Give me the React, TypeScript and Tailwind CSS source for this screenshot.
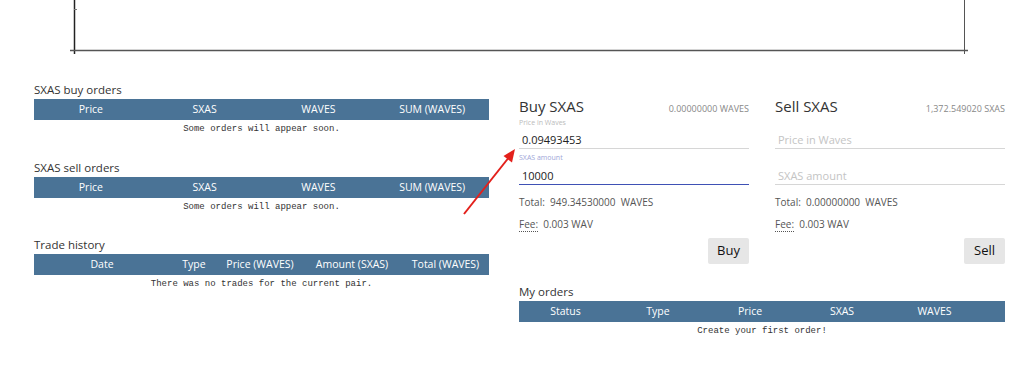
import React from "react";

const sans = "font-['Open_Sans','Noto_Sans',sans-serif]";
const mono = "font-['Liberation_Mono',monospace]";

function OrdersTable({ title, cols, widths, msg }: { title: string; cols: string[]; widths?: string[]; msg: string }) {
  return (
    <div>
      <div className="text-[11.5px] leading-[16px] text-[#333] mb-[1px] pt-[1px]">{title}</div>
      <div className="h-[21px] bg-[#4a7396] flex items-center text-white text-[10.5px]">
        {cols.map((c, i) => (
          <div key={c} className={`${widths ? widths[i] : "flex-1"} text-center whitespace-nowrap`}>{c}</div>
        ))}
      </div>
      <div className={`${mono} text-[9px] leading-[18px] text-center text-[#333]`}>{msg}</div>
    </div>
  );
}

function TradeForm({ kind, balance, filled }: { kind: string; balance: string; filled: boolean }) {
  return (
    <div className="w-[230px] flex flex-col">
      <div className="flex items-baseline justify-between h-[20px]">
        <span className="text-[15px] leading-[16px] text-[#333]">{kind} SXAS</span>
        <span className="text-[9px] leading-[12px] text-[#888]">{balance}</span>
      </div>
      <div className="h-[10px] mt-[0px] text-[7px] leading-[10px] text-[#bbb]">{filled ? "Price in Waves" : ""}</div>
      <div className="h-[21px] border-b border-[#d6d6d6] flex items-end pb-[1px] pl-[3px] text-[11px] leading-[14px]">
        {filled ? <span className="text-[#222]">0.09493453</span> : <span className="text-[#c4c4c4]">Price in Waves</span>}
      </div>
      <div className="h-[10px] mt-[4px] text-[7px] leading-[10px] text-[#9ea6d8]">{filled ? "SXAS amount" : ""}</div>
      <div className={`h-[22px] flex items-end pb-[1px] pl-[3px] text-[11px] leading-[14px] ${filled ? "border-b-[1.5px] border-[#3f51b5]" : "border-b border-[#d6d6d6]"}`}>
        {filled ? <span className="text-[#222]">10000</span> : <span className="text-[#c4c4c4]">SXAS amount</span>}
      </div>
      <div className="mt-[9px] text-[10px] leading-[16px] text-[#555] whitespace-pre">
        {"Total:  " + (filled ? "949.34530000" : "0.00000000") + "  WAVES"}
      </div>
      <div className="mt-[6px] text-[10px] leading-[16px] text-[#555] whitespace-pre">
        <span className="border-b border-dotted border-[#555]">Fee:</span>
        {"  0.003 WAV"}
      </div>
      <div className="flex justify-end mt-[6px]">
        <button className="h-[26px] w-[41px] bg-[#e6e6e6] rounded-[2px] text-[13px] text-[#111]">{kind}</button>
      </div>
    </div>
  );
}

export default function App() {
  return (
    <div className={`w-[1034px] h-[391px] bg-white relative overflow-hidden ${sans}`}>
      <svg width="1034" height="54" className="block">
        <line x1="74.5" y1="0" x2="74.5" y2="54" stroke="#222" strokeWidth="1.5" />
        <line x1="74" y1="9.5" x2="77" y2="9.5" stroke="#777" strokeWidth="1" />
        <line x1="70" y1="50.5" x2="968" y2="50.5" stroke="#555" strokeWidth="1.3" />
        <line x1="964.5" y1="0" x2="964.5" y2="54" stroke="#555" strokeWidth="1" />
      </svg>
      <div className="flex pl-[34px] pt-[27px]">
        <div className="w-[455px] flex flex-col gap-[21px]">
          <OrdersTable title="SXAS buy orders" cols={["Price", "SXAS", "WAVES", "SUM (WAVES)"]} msg="Some orders will appear soon." />
          <OrdersTable title="SXAS sell orders" cols={["Price", "SXAS", "WAVES", "SUM (WAVES)"]} msg="Some orders will appear soon." />
          <div className="-mt-[1px]">
            <OrdersTable
              title="Trade history"
              cols={["Date", "Type", "Price (WAVES)", "Amount (SXAS)", "Total (WAVES)"]}
              widths={["w-[136px]", "w-[48px]", "w-[84px]", "w-[100px]", "flex-1"]}
              msg="There was no trades for the current pair."
            />
          </div>
        </div>
        <div className="ml-[30px] w-[486px] flex flex-col">
          <div className="flex gap-[26px] mt-[17px]">
            <TradeForm kind="Buy" balance="0.00000000 WAVES" filled={true} />
            <TradeForm kind="Sell" balance="1,372.549020 SXAS" filled={false} />
          </div>
          <div className="mt-[19px]">
            <OrdersTable
              title="My orders"
              cols={["Status", "Type", "Price", "SXAS", "WAVES", ""]}
              widths={["w-[93px]", "w-[92px]", "w-[92px]", "w-[92px]", "w-[93px]", "flex-1"]}
              msg="Create your first order!"
            />
          </div>
        </div>
      </div>
      <svg className="absolute left-0 top-0 pointer-events-none" width="1034" height="391">
        <line x1="464" y1="214" x2="508" y2="158.5" stroke="#e3201b" strokeWidth="2" />
        <polygon points="515,149 512,162.5 503.5,156" fill="#e3201b" />
      </svg>
    </div>
  );
}
